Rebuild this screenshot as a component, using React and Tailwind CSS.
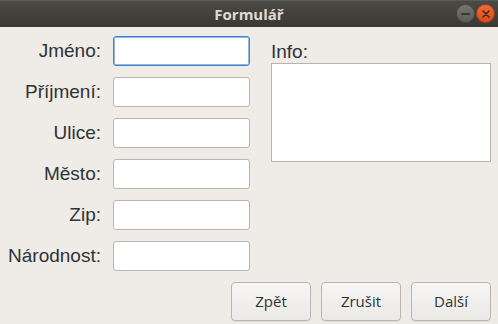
import React from "react";

const fields = ["Jméno:", "Příjmení:", "Ulice:", "Město:", "Zip:", "Národnost:"];

const TitleBar = () => (
  <div className="relative flex h-[27px] items-center justify-center border-t border-[#5a5954] bg-gradient-to-b from-[#4b4a45] to-[#393834]">
    <span className="font-['Open_Sans',sans-serif] text-[15px] font-bold text-[#dfdbd2]">
      Formulář
    </span>
    <div className="absolute right-[3px] top-[3px] flex gap-[1px]">
      <div className="flex h-[19px] w-[19px] items-center justify-center rounded-full border border-[#4a4945] bg-gradient-to-b from-[#75746f] to-[#5d5c58]">
        <div className="h-[2px] w-[9px] rounded bg-[#3a3935]" />
      </div>
      <div className="flex h-[19px] w-[19px] items-center justify-center rounded-full border border-[#a8401a] bg-gradient-to-b from-[#f26a35] to-[#dd4a16]">
        <svg width="8" height="8" viewBox="0 0 8 8">
          <path d="M1 1L7 7M7 1L1 7" stroke="#3c2a20" strokeWidth="1.6" strokeLinecap="round" />
        </svg>
      </div>
    </div>
  </div>
);

const Btn = ({ children }) => (
  <button
    type="button"
    className="h-[39px] w-[80px] rounded-[4px] border border-[#b9b5ae] bg-gradient-to-b from-[#f7f6f5] to-[#ebe9e6] font-['Open_Sans',sans-serif] text-[15px] font-medium text-[#2e3436] shadow-[0_1px_0_rgba(0,0,0,0.06)]"
  >
    {children}
  </button>
);

export default function App() {
  return (
    <div className="flex h-[324px] w-[498px] flex-col bg-[#efebe7] font-['Liberation_Sans',Arial,sans-serif] text-[#2e3436]">
      <TitleBar />
      <div className="flex pt-[9px]">
        <div className="grid grid-cols-[101px_137px] gap-x-[12px] gap-y-[11px]">
          {fields.map((f, i) => (
            <React.Fragment key={f}>
              <label className="text-right text-[19px] leading-[30px]">{f}</label>
              <input
                className={`h-[30px] w-[137px] rounded-[3px] bg-white outline-none ${
                  i === 0
                    ? "border border-[#3d84d6] shadow-[inset_0_0_0_1px_#8fb7e6]"
                    : "border border-[#bbb6ae]"
                }`}
              />
            </React.Fragment>
          ))}
        </div>
        <div className="ml-[21px] flex flex-col pt-[5px]">
          <span className="text-[19px] leading-[22px]">Info:</span>
          <div className="h-[99px] w-[220px] border border-[#b9b5ae] bg-white" />
        </div>
      </div>
      <div className="mt-[11px] flex justify-end gap-[10px] pr-[7px]">
        <Btn>Zpět</Btn>
        <Btn>Zrušit</Btn>
        <Btn>Další</Btn>
      </div>
    </div>
  );
}
